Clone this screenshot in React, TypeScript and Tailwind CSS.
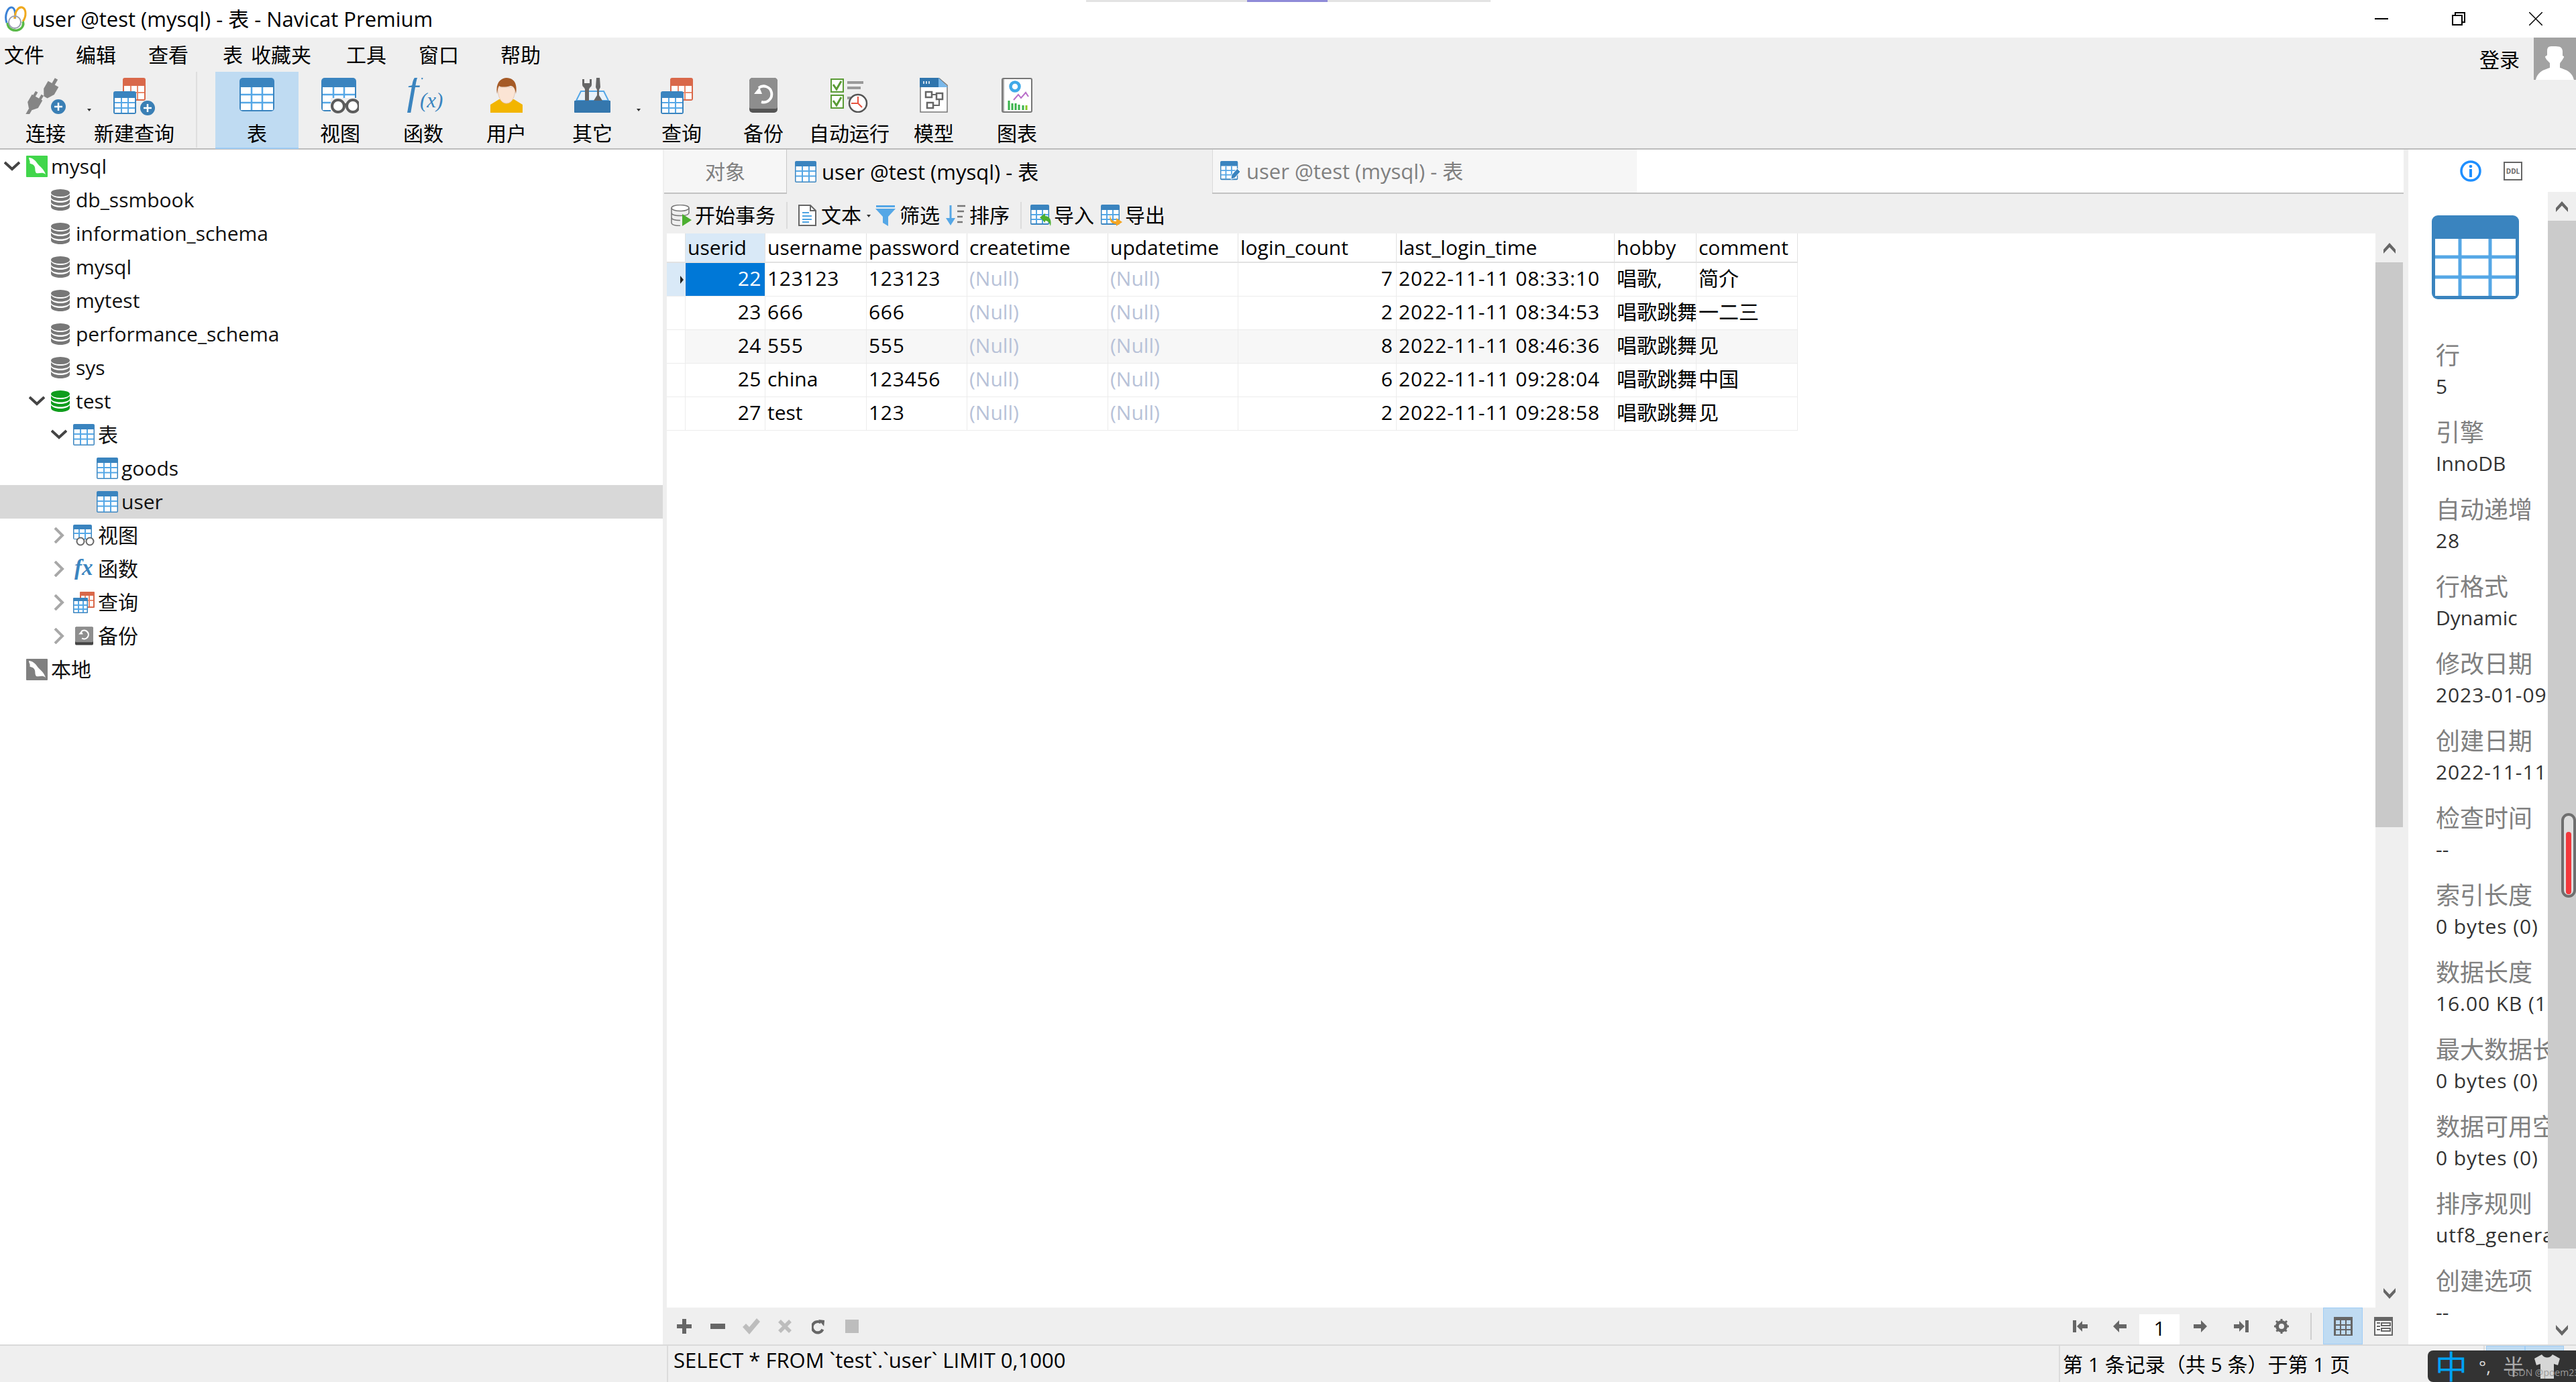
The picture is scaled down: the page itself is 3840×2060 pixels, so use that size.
import React from "react";

const UI = "font-['Open_Sans','Noto_Sans_CJK_SC',sans-serif]";

function TableIcon({ className = "w-[52px] h-[50px]" }: { className?: string }) {
  return (
    <svg viewBox="0 0 52 50" className={className}>
      <rect width="52" height="50" rx="5" fill="#3a84bf" />
      <rect x="2" y="14" width="48" height="34" fill="#fff" />
      <path d="M18 14v34M34 14v34M2 25h48M2 37h48" stroke="#55a7e6" strokeWidth="2.5" />
    </svg>
  );
}

function SmallTable({ className = "w-[32px] h-[32px]" }: { className?: string }) {
  return (
    <svg viewBox="0 0 32 32" className={className}>
      <rect width="32" height="32" rx="2" fill="#3a84bf" />
      <rect x="1.5" y="8" width="29" height="22.5" fill="#fff" />
      <path d="M11 8v23M21 8v23M1 15h30M1 22.500h30" stroke="#55a7e6" strokeWidth="2" />
    </svg>
  );
}

function QueryIcon({ badge = true, className = "w-[62px] h-[56px]" }: { badge?: boolean; className?: string }) {
  return (
    <svg viewBox="0 0 62 56" className={className}>
      <rect x="14" y="0" width="34" height="34" rx="3" fill="#d9684a" />
      <rect x="16" y="12" width="30" height="20" fill="#fff" />
      <path d="M26 12v20M36 12v20M16 22h30" stroke="#ea8a6c" strokeWidth="2" />
      <rect x="0" y="20" width="34" height="34" rx="3" fill="#3a84bf" />
      <rect x="2" y="30" width="30" height="22" fill="#fff" />
      <path d="M12 30v22M22 30v22M2 37h30M2 45h30" stroke="#55a7e6" strokeWidth="2" />
      {badge && (
        <>
          <ellipse cx="51" cy="45" rx="11" ry="11" fill="#3a7fb5" />
          <path d="M51 39v12M45 45h12" stroke="#fff" strokeWidth="2.5" />
        </>
      )}
    </svg>
  );
}

function SmallQuery() {
  return (
    <svg viewBox="0 0 32 32" className="h-[32px] w-[32px]">
      <rect x="10" y="0" width="22" height="24" rx="1" fill="#d9684a" />
      <rect x="12" y="6" width="18" height="16" fill="#fff" />
      <path d="M18 6v16M24 6v16M12 13h18" stroke="#ea8a6c" strokeWidth="2" />
      <rect x="0" y="9" width="22" height="23" rx="1" fill="#3a84bf" />
      <rect x="1.500" y="14" width="19" height="16.500" fill="#fff" />
      <path d="M8 14v17M15 14v17M1 20h20M1 26h20" stroke="#55a7e6" strokeWidth="2" />
    </svg>
  );
}

function PlugIcon() {
  return (
    <svg viewBox="0 0 60 54" className="w-[60px] h-[54px]">
      <g transform="translate(37,17) rotate(30)" fill="#858585">
        <rect x="-2.500" y="-18" width="5" height="11" />
        <path d="M-9 -9 H9 V4 L3 14 H-3 L-9 4Z" />
      </g>
      <g transform="translate(13,37) rotate(30)" fill="#858585">
        <rect x="-7" y="-16" width="4" height="8" />
        <rect x="3" y="-16" width="4" height="8" />
        <path d="M-9 -9 H9 V4 L3 11 H-3 L-9 4Z" />
        <rect x="-2.500" y="10" width="5" height="11" />
      </g>
      <circle cx="49" cy="43" r="11" fill="#3a7fb5" />
      <path d="M49 37v12M43 43h12" stroke="#fff" strokeWidth="2.5" />
    </svg>
  );
}

function ViewIcon() {
  return (
    <svg viewBox="0 0 56 54" className="w-[56px] h-[54px]">
      <rect width="52" height="50" rx="5" fill="#3a84bf" />
      <rect x="2" y="14" width="48" height="34" fill="#fff" />
      <path d="M18 14v34M34 14v34M2 25h48M2 37h48" stroke="#55a7e6" strokeWidth="2.5" />
      <rect x="14" y="30" width="42" height="24" fill="#efefef" />
      <circle cx="25" cy="42" r="9" fill="#fff" stroke="#5c5c5c" strokeWidth="4" />
      <circle cx="47" cy="42" r="9" fill="#fff" stroke="#5c5c5c" strokeWidth="4" />
      <path d="M33 40h6" stroke="#5c5c5c" strokeWidth="4" />
    </svg>
  );
}

function FuncIcon() {
  return (
    <svg viewBox="0 0 58 52" className="w-[58px] h-[52px]">
      <text x="4" y="40" fontFamily="'Liberation Serif',serif" fontStyle="italic" fontSize="64" fill="#3a84bf">f</text>
      <text x="24" y="44" fontFamily="'Liberation Serif',serif" fontStyle="italic" fontSize="31" fill="#3a84bf">(x)</text>
    </svg>
  );
}

function UserIcon() {
  return (
    <svg viewBox="0 0 50 52" className="w-[50px] h-[52px]">
      <path d="M1 40 L14 32 L36 32 L49 40 V52 H1Z" fill="#f2b500" />
      <path d="M12 14 C12 34 20 38 25 38 C30 38 38 34 38 14Z" fill="#fbe4d4" stroke="#e5c9b6" />
      <path d="M11 24 C8 6 18 0 25 0 C34 0 42 6 39 24 C38 16 35 12 31 12 C24 14 16 14 14 12 C12 15 12 18 11 24Z" fill="#a55a26" />
    </svg>
  );
}

function ToolsIcon() {
  return (
    <svg viewBox="0 0 54 52" className="w-[54px] h-[52px]">
      <path d="M3 34 L10 20 H44 L51 34Z" fill="#e8f2fa" stroke="#55a7e6" strokeWidth="2" />
      <path d="M12 2 V10 C12 14 16 14 16 18 V34 H22 V18 C22 14 26 14 26 10 V2 L23 2 V8 H15 V2Z" fill="#666" />
      <path d="M33 0 H38 L39 14 L37 18 V26 L42 34 H29 L34 26 V18 L32 14Z" fill="#666" />
      <rect x="0" y="34" width="54" height="18" rx="1" fill="#3577ad" />
    </svg>
  );
}

function BackupIcon({ className = "w-[42px] h-[52px]" }: { className?: string }) {
  return (
    <svg viewBox="0 0 42 52" className={className}>
      <rect width="42" height="52" rx="5" fill="#555" />
      <path d="M0 5a5 5 0 0 1 5-5h32a5 5 0 0 1 5 5v38a3 3 0 0 1-3 3H3a3 3 0 0 1-3-3Z" fill="#8e8e8e" />
      <path d="M14 15 A12 12 0 1 1 18 36" fill="none" stroke="#fff" strokeWidth="4" />
      <path d="M7 24 L19 24 L15 14Z" fill="#fff" />
    </svg>
  );
}

function AutoRunIcon() {
  return (
    <svg viewBox="0 0 56 52" className="w-[56px] h-[52px]">
      <rect x="1" y="2" width="18" height="19" fill="#fff" stroke="#5a9b35" strokeWidth="2" />
      <path d="M4 10 L9 17 L16 5" fill="none" stroke="#5a9b35" strokeWidth="3" />
      <rect x="1" y="26" width="18" height="19" fill="#fff" stroke="#5a9b35" strokeWidth="2" />
      <path d="M4 34 L9 41 L16 29" fill="none" stroke="#5a9b35" strokeWidth="3" />
      <path d="M25 5h24v4H25ZM25 13h20v4H25ZM25 28h8v4h-8Z" fill="#9a9a9a" />
      <circle cx="41" cy="38" r="13" fill="#fff" stroke="#555" strokeWidth="2.500" />
      <path d="M41 28v10M31 38h10M41 38l6 6" stroke="#e8533f" strokeWidth="2" />
    </svg>
  );
}

function ModelIcon() {
  return (
    <svg viewBox="0 0 42 52" className="w-[42px] h-[52px]">
      <path d="M1 0 H28 L41 11 V51 H1Z" fill="#fff" stroke="#777" strokeWidth="1.500" />
      <path d="M0 0 H28 L42 14 H0Z" fill="#2f75ad" />
      <path d="M28 0 L42 14 H28Z" fill="#7ab8ea" />
      <path d="M6 5v4M10 5v4M14 5v4" stroke="#fff" strokeWidth="1.500" />
      <path d="M9 21h9v8H9ZM25 23h9v9h-9ZM11 37h9v8h-9Z" fill="none" stroke="#666" strokeWidth="2.500" />
      <path d="M18 25h7M29 32v9H20" fill="none" stroke="#666" strokeWidth="2" />
    </svg>
  );
}

function ChartIcon() {
  return (
    <svg viewBox="0 0 46 52" className="w-[46px] h-[52px]">
      <rect x="1" y="1" width="44" height="50" rx="2" fill="#fff" stroke="#777" strokeWidth="2" />
      <path d="M3 2v48" stroke="#aaa" strokeWidth="2" />
      <circle cx="20" cy="13" r="6.500" fill="none" stroke="#3fa9e8" strokeWidth="4.500" />
      <path d="M18 33 L25 25 L29 30 L36 22 L40 28" fill="none" stroke="#b86dc9" strokeWidth="2" />
      <path d="M11 34v14M16 38v10M21 38v10M26 40v8M32 41v7" stroke="#38b34a" strokeWidth="3" />
      <path d="M37 41v7" stroke="#8ac926" strokeWidth="3" />
    </svg>
  );
}

function DbIcon({ color }: { color: string }) {
  return (
    <svg viewBox="0 0 28 32" className="w-[28px] h-[32px]">
      <ellipse cx="14" cy="5.500" rx="14" ry="5.500" fill={color} />
      <path d="M0 8v4c0 3 6 5.500 14 5.500s14-2.500 14-5.500V8c-2 3-8 5-14 5S2 11 0 8Z" fill={color} />
      <path d="M0 15v4c0 3 6 5.500 14 5.500s14-2.500 14-5.500v-4c-2 3-8 5-14 5S2 18 0 15Z" fill={color} />
      <path d="M0 22v4c0 3.500 6 6 14 6s14-2.500 14-6v-4c-2 3-8 5-14 5S2 25 0 22Z" fill={color} />
    </svg>
  );
}

function Conn({ color }: { color: string }) {
  return (
    <svg viewBox="0 0 32 32" className="w-[32px] h-[32px]">
      <rect width="32" height="32" rx="1" fill={color} />
      <path d="M4 3 C9 3 14 7 17 12 C20 16 26 19 29 28 C24 24 21 27 15 26 C12 22 15 18 11 14 C9 12 7 13 5 11 C7 10 4 6 4 3Z" fill="#fff" />
    </svg>
  );
}

function Chevron({ open }: { open: boolean }) {
  return open ? (
    <svg viewBox="0 0 24 16" className="w-[24px] h-[16px]">
      <path d="M1 2 L12 12 L23 2" fill="none" stroke="#444" strokeWidth="4" />
    </svg>
  ) : (
    <svg viewBox="0 0 16 24" className="w-[16px] h-[24px]">
      <path d="M2 1 L13 12 L2 23" fill="none" stroke="#a8a8a8" strokeWidth="4" />
    </svg>
  );
}

function ArrowUp() {
  return (
    <svg viewBox="0 0 18 16" className="w-[18px] h-[16px]">
      <path d="M0 10 L9 0 L18 10 V16 L9 6.500 L0 16Z" fill="#666" />
    </svg>
  );
}
function ArrowDown() {
  return (
    <svg viewBox="0 0 18 16" className="w-[18px] h-[16px]">
      <path d="M0 0 L9 9.500 L18 0 V6 L9 16 L0 6Z" fill="#666" />
    </svg>
  );
}

function ToolBtn({ label, active, w = "w-[124px]", children }: { label: string; active?: boolean; w?: string; children: React.ReactNode }) {
  return (
    <div className={`flex h-[115px] flex-col items-center ${w} ${active ? "bg-[#bfdbf2] border-b-2 border-[#9fcdf6]" : ""}`}>
      <div className="flex h-[65px] w-full items-start justify-center pt-[9px]">{children}</div>
      <div className="leading-[40px] mt-[7px] whitespace-nowrap">{label}</div>
    </div>
  );
}

function Dot({ className = "" }: { className?: string }) {
  return <div className={`h-0 w-0 border-x-[3px] border-t-[4px] border-x-transparent border-t-[#333] ${className}`} />;
}

function TreeRow({ pl, chev, icon, text, selected }: { pl: string; chev?: "open" | "closed"; icon: React.ReactNode; text: string; selected?: boolean }) {
  return (
    <div className={`flex h-[50px] items-center whitespace-nowrap ${pl} ${selected ? "bg-[#d8d8d8]" : ""}`}>
      <div className="flex w-[39px] justify-center pr-[3px]">{chev && <Chevron open={chev === "open"} />}</div>
      <div className="flex h-[32px] w-[32px] items-center justify-start">{icon}</div>
      <div className="ml-[5px] leading-[50px]">{text}</div>
    </div>
  );
}

const rowCols = "grid w-[1686px] grid-cols-[28px_119px_151px_150px_210px_194px_236px_325px_122px_151px]";
const cellB = "border-r border-b border-[#ececec] px-[3px] leading-[46px] whitespace-nowrap overflow-hidden";
const num = (v: string) => (/^\d+$/.test(v) ? "tracking-[0.7px]" : "");

const rows = [
  ["22", "123123", "123123", "7", "2022-11-11 08:33:10", "唱歌,", "简介"],
  ["23", "666", "666", "2", "2022-11-11 08:34:53", "唱歌跳舞", "一二三"],
  ["24", "555", "555", "8", "2022-11-11 08:46:36", "唱歌跳舞", "见"],
  ["25", "china", "123456", "6", "2022-11-11 09:28:04", "唱歌跳舞", "中国"],
  ["27", "test", "123", "2", "2022-11-11 09:28:58", "唱歌跳舞", "见"],
];

const headers = ["userid", "username", "password", "createtime", "updatetime", "login_count", "last_login_time", "hobby", "comment"];

const props = [
  ["行", "5"],
  ["引擎", "InnoDB"],
  ["自动递增", "28"],
  ["行格式", "Dynamic"],
  ["修改日期", "2023-01-09 10:12:45"],
  ["创建日期", "2022-11-11 08:30:12"],
  ["检查时间", "--"],
  ["索引长度", "0 bytes (0)"],
  ["数据长度", "16.00 KB (16,384)"],
  ["最大数据长度", "0 bytes (0)"],
  ["数据可用空间", "0 bytes (0)"],
  ["排序规则", "utf8_general_ci"],
  ["创建选项", "--"],
];

function Grid() {
  return (
    <div className="min-w-0 flex-1 bg-white overflow-hidden">
      <div className={`${rowCols} h-[44px]`}>
        <div className="border-r border-b-2 border-[#e2e2e2]" />
        {headers.map((h, i) => (
          <div key={h} className={`border-r border-b-2 border-[#e2e2e2] px-[3px] leading-[42px] whitespace-nowrap overflow-hidden ${i === 0 ? "bg-[#d9e9f7]" : ""}`}>
            {h}
          </div>
        ))}
      </div>
      {rows.map((r, i) => (
        <div key={r[0]} className={`${rowCols} h-[50px] ${i === 2 ? "bg-[#f7f7f7]" : ""}`}>
          <div className={`flex items-center justify-end pr-[2px] border-r border-b border-[#ececec] ${i === 0 ? "bg-[#d9e9f7]" : "bg-white"}`}>
            {i === 0 && <div className="h-0 w-0 border-y-[6px] border-l-[5px] border-y-transparent border-l-[#222]" />}
          </div>
          <div className={`${cellB} pr-[5px] text-right tracking-[0.5px] ${i === 0 ? "bg-[#0078d7] text-white" : ""}`}>{r[0]}</div>
          <div className={`${cellB} ${num(r[1])}`}>{r[1]}</div>
          <div className={`${cellB} ${num(r[2])}`}>{r[2]}</div>
          <div className={`${cellB} text-[#b8c2d8]`}>(Null)</div>
          <div className={`${cellB} text-[#b8c2d8]`}>(Null)</div>
          <div className={`${cellB} pr-[5px] text-right`}>{r[3]}</div>
          <div className={`${cellB} tracking-[0.9px]`}>{r[4]}</div>
          <div className={cellB}>{r[5]}</div>
          <div className={cellB}>{r[6]}</div>
        </div>
      ))}
    </div>
  );
}

export default function App() {
  return (
    <div className={`relative flex h-[2060px] w-[3840px] flex-col overflow-hidden bg-[#efefef] text-[30px] text-black ${UI}`}>
      {/* Title bar */}
      <div className="flex h-[56px] items-center bg-white pl-[4px]">
        <svg viewBox="0 0 38 40" className="h-[40px] w-[38px]">
          <path d="M6 26 C2 14 8 3 13 3 C18 3 20 12 18 20" fill="none" stroke="#3b82d6" strokeWidth="3" />
          <path d="M18 20 C18 8 24 2 29 3 C35 5 36 16 30 24" fill="none" stroke="#f0a91e" strokeWidth="3" />
          <path d="M7 26 C8 36 16 38 22 37 C30 35 32 28 30 24" fill="none" stroke="#58b947" strokeWidth="3.500" />
          <circle cx="18" cy="25" r="9" fill="none" stroke="#9a9fb0" strokeWidth="2" />
        </svg>
        <div className="ml-[6px] whitespace-nowrap text-[31px]">user @test (mysql) - 表 - Navicat Premium</div>
        <div className="ml-auto flex items-center">
          <div className="flex w-[115px] justify-center"><div className="h-[2px] w-[20px] bg-black" /></div>
          <div className="flex w-[115px] justify-center">
            <svg viewBox="0 0 20 20" className="h-[20px] w-[20px]">
              <path d="M1 5h14v14H1ZM5 5V1h14v14h-4" fill="none" stroke="#000" strokeWidth="2" />
            </svg>
          </div>
          <div className="flex w-[118px] justify-center pr-[3px]">
            <svg viewBox="0 0 20 20" className="h-[20px] w-[20px]">
              <path d="M0 0 L20 20 M20 0 L0 20" stroke="#000" strokeWidth="1.500" />
            </svg>
          </div>
        </div>
      </div>

      {/* Menu */}
      <div className="relative flex h-[51px] items-center pl-[6px] whitespace-nowrap">
        <span>文件</span>
        <span className="ml-[47px]">编辑</span>
        <span className="ml-[48px]">查看</span>
        <span className="ml-[51px]">表</span>
        <span className="ml-[12px]">收藏夹</span>
        <span className="ml-[52px]">工具</span>
        <span className="ml-[48px]">窗口</span>
        <span className="ml-[62px]">帮助</span>
        <span className="ml-auto mr-[84px] mt-[14px]">登录</span>
        <div className="absolute right-0 top-0 h-[63px] w-[63px] overflow-hidden bg-[#a2a2a2]">
          <svg viewBox="0 0 63 63" className="h-[63px] w-[63px]">
            <path d="M3 63 C6 50 16 48 24 45 L24 38 C20 34 18 32 17 29 C17 27 19 28 20 26 L20 20 C20 12 25 13 31 13 C39 13 42 14 43 20 L43 27 C45 28 46 28 44 31 C42 35 40 36 39 39 L39 45 C47 48 57 50 60 63Z" fill="#fff" />
          </svg>
        </div>
      </div>

      {/* Toolbar */}
      <div className="flex h-[116px] items-start border-b-2 border-[#bcbcbc] pl-[6px]">
        <ToolBtn label="连接"><PlugIcon /></ToolBtn>
        <Dot className="mt-[55px]" />
        <div className="w-[2px]" />
        <ToolBtn label="新建查询"><QueryIcon /></ToolBtn>
        <div className="ml-[30px] h-[113px] w-[2px] bg-[#dedede]" />
        <div className="ml-[27px]" />
        <ToolBtn label="表" active><TableIcon /></ToolBtn>
        <ToolBtn label="视图"><ViewIcon /></ToolBtn>
        <ToolBtn label="函数"><FuncIcon /></ToolBtn>
        <ToolBtn label="用户"><UserIcon /></ToolBtn>
        <ToolBtn label="其它" w="w-[132px]"><ToolsIcon /></ToolBtn>
        <Dot className="mt-[55px]" />
        <ToolBtn label="查询" w="w-[122px]"><QueryIcon badge={false} className="w-[62px] h-[56px]" /></ToolBtn>
        <ToolBtn label="备份" w="w-[122px]"><BackupIcon /></ToolBtn>
        <ToolBtn label="自动运行" w="w-[134px]"><AutoRunIcon /></ToolBtn>
        <ToolBtn label="模型" w="w-[118px]"><ModelIcon /></ToolBtn>
        <ToolBtn label="图表" w="w-[130px]"><ChartIcon /></ToolBtn>
      </div>

      {/* Main */}
      <div className="flex h-[1781px] min-h-0">
        {/* Tree */}
        <div className="w-[988px] shrink-0 bg-white text-[#111]">
          <TreeRow pl="pl-0" chev="open" icon={<Conn color="#41d64b" />} text="mysql" />
          <TreeRow pl="pl-[37px]" icon={<DbIcon color="#777" />} text="db_ssmbook" />
          <TreeRow pl="pl-[37px]" icon={<DbIcon color="#777" />} text="information_schema" />
          <TreeRow pl="pl-[37px]" icon={<DbIcon color="#777" />} text="mysql" />
          <TreeRow pl="pl-[37px]" icon={<DbIcon color="#777" />} text="mytest" />
          <TreeRow pl="pl-[37px]" icon={<DbIcon color="#777" />} text="performance_schema" />
          <TreeRow pl="pl-[37px]" icon={<DbIcon color="#777" />} text="sys" />
          <TreeRow pl="pl-[37px]" chev="open" icon={<DbIcon color="#0f9d1c" />} text="test" />
          <TreeRow pl="pl-[70px]" chev="open" icon={<SmallTable />} text="表" />
          <TreeRow pl="pl-[105px]" icon={<SmallTable />} text="goods" />
          <TreeRow pl="pl-[105px]" selected icon={<SmallTable />} text="user" />
          <TreeRow pl="pl-[70px]" chev="closed" icon={
            <svg viewBox="0 0 32 32" className="h-[32px] w-[32px]">
              <rect width="28" height="22" rx="2" fill="#3a84bf" />
              <rect x="1.500" y="7" width="25" height="14" fill="#fff" />
              <path d="M9 7v14M18 7v14M1 13h26" stroke="#55a7e6" strokeWidth="2" />
              <circle cx="11" cy="25" r="5.500" fill="#fff" stroke="#666" strokeWidth="2" />
              <circle cx="25" cy="25" r="5.500" fill="#fff" stroke="#666" strokeWidth="2" />
            </svg>
          } text="视图" />
          <TreeRow pl="pl-[70px]" chev="closed" icon={
            <svg viewBox="0 0 32 32" className="h-[32px] w-[32px]">
              <text x="2" y="25" fontFamily="'Liberation Serif',serif" fontStyle="italic" fontWeight="bold" fontSize="33" fill="#3a84bf">fx</text>
            </svg>
          } text="函数" />
          <TreeRow pl="pl-[70px]" chev="closed" icon={<SmallQuery />} text="查询" />
          <TreeRow pl="pl-[70px]" chev="closed" icon={
            <svg viewBox="0 0 32 32" className="ml-[3px] h-[32px] w-[27px]">
              <rect width="32" height="32" rx="2" fill="#444" />
              <rect width="32" height="27" rx="2" fill="#8e8e8e" />
              <path d="M11 8 A7.500 7.500 0 1 1 12 20" fill="none" stroke="#fff" strokeWidth="2.500" />
              <path d="M6 13 L14 13 L11 7Z" fill="#fff" />
            </svg>
          } text="备份" />
          <TreeRow pl="pl-0" icon={<Conn color="#808080" />} text="本地" />
        </div>

        {/* Center */}
        <div className="flex w-[595px] min-w-0 flex-1 flex-col">
          {/* Tabs */}
          <div className="ml-[2px] mr-[7px] flex h-[66px] shrink-0 border-b-2 border-[#c2c2c2] bg-white">
            <div className="flex w-[183px] items-center justify-center border-r border-[#c8c8c8] bg-[#f6f6f6] text-[#808080]">对象</div>
            <div className="-mb-[2px] flex w-[634px] items-center bg-[#efefef] pl-[12px]">
              <SmallTable />
              <span className="ml-[8px] whitespace-nowrap text-[31px]">user @test (mysql) - 表</span>
            </div>
            <div className="flex w-[633px] items-center border-l border-[#dadada] bg-[#f6f6f6] pl-[11px] text-[#808080]">
              <svg viewBox="0 0 32 32" className="h-[32px] w-[30px]">
                <rect width="28" height="30" rx="2" fill="#3a84bf" />
                <rect x="1.500" y="8" width="25" height="20" fill="#fff" />
                <path d="M9 8v20M18 8v20M1 15h26M1 22h26" stroke="#55a7e6" strokeWidth="2" />
                <path d="M17 29 L18 22 L27 12 L32 17 L23 27Z" fill="#3a84bf" stroke="#fff" />
              </svg>
              <span className="ml-[9px] whitespace-nowrap text-[31px]">user @test (mysql) - 表</span>
            </div>
          </div>

          {/* Form toolbar */}
          <div className="flex h-[59px] shrink-0 items-center whitespace-nowrap pt-[4px] pl-[12px]">
            <svg viewBox="0 0 31 32" className="h-[32px] w-[31px]">
              <ellipse cx="14" cy="5" rx="13" ry="4.500" fill="#fff" stroke="#777" strokeWidth="1.500" />
              <path d="M1 5v22c0 3 6 4.500 13 4.500M27 5v8M1 12c0 3 6 4.500 13 4.500s13-1.500 13-4.500M1 19c0 3 6 4.500 13 4.500" fill="none" stroke="#777" strokeWidth="1.500" />
              <path d="M17 14 L31 23 L17 32Z" fill="#4caf30" />
            </svg>
            <span className="ml-[5px]">开始事务</span>
            <div className="ml-[16px] h-[40px] w-[2px] bg-[#dcdcdc]" />
            <svg viewBox="0 0 27 32" className="ml-[16px] h-[32px] w-[27px]">
              <path d="M1 1 H18 L26 9 V31 H1Z" fill="#fff" stroke="#666" strokeWidth="2" />
              <path d="M18 1v8h8" fill="none" stroke="#666" strokeWidth="2" />
              <path d="M6 12h10M6 17h14M6 22h14M6 26h10" stroke="#4da3e2" strokeWidth="2" />
            </svg>
            <span className="ml-[7px]">文本</span>
            <Dot className="ml-[8px] mt-[2px]" />
            <svg viewBox="0 0 32 32" className="ml-[6px] h-[32px] w-[32px]">
              <path d="M2 1h28v3H2Z" fill="#55a7e6" />
              <path d="M1 6 H31 L20 18 V32 L12 27 V18Z" fill="#55a7e6" />
            </svg>
            <span className="ml-[5px]">筛选</span>
            <svg viewBox="0 0 32 32" className="ml-[8px] h-[32px] w-[32px]">
              <path d="M8 1v22" stroke="#55a7e6" strokeWidth="3" />
              <path d="M1 20 H15 L8 31Z" fill="#55a7e6" />
              <path d="M18 2h12M18 10h10M18 18h8M18 26h8" stroke="#777" strokeWidth="2.500" />
            </svg>
            <span className="ml-[4px]">排序</span>
            <div className="ml-[16px] h-[40px] w-[2px] bg-[#dcdcdc]" />
            <svg viewBox="0 0 32 32" className="ml-[13px] h-[32px] w-[32px]">
              <rect width="28" height="30" rx="2" fill="#3a84bf" />
              <rect x="1.500" y="8" width="25" height="20" fill="#fff" />
              <path d="M9 8v20M18 8v20M1 15h26M1 22h26" stroke="#55a7e6" strokeWidth="2" />
              <path d="M14 19 L22 13 V17 C29 17 32 24 30 32 C28 26 26 24 22 24 V27Z" fill="#4caf30" />
            </svg>
            <span className="ml-[3px]">导入</span>
            <svg viewBox="0 0 32 32" className="ml-[10px] h-[32px] w-[32px]">
              <rect width="28" height="30" rx="2" fill="#3a84bf" />
              <rect x="1.500" y="8" width="25" height="20" fill="#fff" />
              <path d="M9 8v20M18 8v20M1 15h26M1 22h26" stroke="#55a7e6" strokeWidth="2" />
              <path d="M14 14 C14 22 17 25 23 25 V20 L32 26 L23 32 V29 C15 29 12 24 14 14Z" fill="#f5a623" />
            </svg>
            <span className="ml-[4px]">导出</span>
          </div>

          {/* Grid + scrollbar */}
          <div className="flex min-h-0 flex-1 pl-[6px] pr-[8px]">
            <Grid />
            <div className="flex w-[41px] shrink-0 flex-col items-center">
              <div className="flex h-[43px] items-center justify-center"><ArrowUp /></div>
              <div className="h-[842px] w-full bg-[#c9c9c9]" />
              <div className="flex-1" />
              <div className="flex h-[43px] items-center justify-center"><ArrowDown /></div>
            </div>
          </div>

          {/* Bottom bar */}
          <div className="flex h-[55px] shrink-0 items-center pl-[7px]">
            <div className="flex w-[50px] justify-center">
              <svg viewBox="0 0 22 22" className="h-[22px] w-[22px]"><path d="M8 0h6v8h8v6h-8v8H8v-8H0V8h8Z" fill="#666" /></svg>
            </div>
            <div className="flex w-[50px] justify-center">
              <svg viewBox="0 0 22 8" className="h-[8px] w-[22px]"><rect width="22" height="8" fill="#666" /></svg>
            </div>
            <div className="flex w-[50px] justify-center">
              <svg viewBox="0 0 26 24" className="h-[24px] w-[26px]"><path d="M0 13 L5 8 L10 13 L21 0 L26 5 L10 24Z" fill="#bdbdbd" /></svg>
            </div>
            <div className="flex w-[50px] justify-center">
              <svg viewBox="0 0 20 20" className="h-[20px] w-[20px]"><path d="M2 2 L18 18 M18 2 L2 18" stroke="#bdbdbd" strokeWidth="5.500" /></svg>
            </div>
            <div className="flex w-[50px] justify-center">
              <svg viewBox="0 0 22 24" className="h-[24px] w-[20px]">
                <path d="M18 17 A9 9 0 1 1 15 6" fill="none" stroke="#666" strokeWidth="4.500" />
                <path d="M11 1 L21 2 L20 12Z" fill="#666" />
              </svg>
            </div>
            <div className="flex w-[50px] justify-center"><div className="h-[20px] w-[20px] bg-[#bdbdbd]" /></div>

            <div className="ml-auto flex h-full items-center pr-[7px]">
              <div className="flex w-[60px] justify-center">
                <svg viewBox="0 0 22 18" className="h-[18px] w-[22px]"><path d="M0 0h5v18H0ZM6 9 L14 1 V6 H22 V12 H14 V17Z" fill="#666" /></svg>
              </div>
              <div className="flex w-[58px] justify-center">
                <svg viewBox="0 0 20 18" className="h-[18px] w-[20px]"><path d="M0 9 L9 0 V6 H20 V12 H9 V18Z" fill="#666" /></svg>
              </div>
              <div className="flex h-[45px] w-[60px] items-center justify-center self-end bg-white pb-[4px]">1</div>
              <div className="flex w-[62px] justify-center">
                <svg viewBox="0 0 20 18" className="h-[18px] w-[20px]"><path d="M20 9 L11 0 V6 H0 V12 H11 V18Z" fill="#666" /></svg>
              </div>
              <div className="flex w-[60px] justify-center">
                <svg viewBox="0 0 22 18" className="h-[18px] w-[22px]"><path d="M22 0h-5v18h5ZM16 9 L8 1 V6 H0 V12 H8 V17Z" fill="#666" /></svg>
              </div>
              <div className="flex w-[60px] justify-center">
                <svg viewBox="0 0 22 22" className="h-[22px] w-[22px]">
                  <circle cx="11" cy="11" r="6.500" fill="none" stroke="#666" strokeWidth="5" />
                  <path d="M11 0v22M0 11h22M3 3l16 16M19 3L3 19" stroke="#666" strokeWidth="3" strokeDasharray="4 14 4" />
                </svg>
              </div>
              <div className="ml-[13px] h-[40px] w-[2px] bg-[#cfcfcf]" />
              <div className="ml-[17px] flex h-[55px] w-[59px] items-center justify-center border border-[#9fcdf6] bg-[#bfdbf2]">
                <svg viewBox="0 0 28 28" className="h-[28px] w-[28px]">
                  <rect width="28" height="28" fill="#666" />
                  <path d="M3 5h6v6H3ZM11 5h6v6h-6ZM19 5h6v6h-6ZM3 13h6v5H3ZM11 13h6v5h-6ZM19 13h6v5h-6ZM3 20h6v6H3ZM11 20h6v6h-6ZM19 20h6v6h-6Z" fill="#bfdbf2" />
                </svg>
              </div>
              <div className="flex w-[61px] justify-center">
                <svg viewBox="0 0 28 28" className="h-[28px] w-[28px]">
                  <rect x="1" y="1" width="26" height="26" fill="#fff" stroke="#666" strokeWidth="2" />
                  <path d="M1 4h26" stroke="#666" strokeWidth="4" />
                  <path d="M4 9h5M4 14h5M4 19h5" stroke="#666" strokeWidth="2" />
                  <path d="M11 9h13v4H11ZM11 17h13v4H11Z" fill="none" stroke="#666" strokeWidth="2" />
                </svg>
              </div>
            </div>
          </div>
        </div>

        {/* Right panel */}
        <div className="flex w-[250px] shrink-0 flex-col bg-white">
          <div className="flex h-[63px] shrink-0 items-center pl-[77px]">
            <svg viewBox="0 0 32 32" className="h-[32px] w-[32px]">
              <circle cx="16" cy="16" r="14" fill="#fff" stroke="#1e8fff" strokeWidth="3.500" />
              <circle cx="16" cy="9" r="2.300" fill="#1e8fff" />
              <rect x="14" y="13" width="4" height="12" fill="#1e8fff" />
            </svg>
            <div className="ml-[33px] flex h-[28px] w-[28px] items-center justify-center border-2 border-[#666] text-[10px] font-bold leading-none text-[#666]">DDL</div>
          </div>
          <div className="flex min-h-0 flex-1">
            <div className="w-[208px] overflow-hidden">
              <div className="ml-[35px] mt-[35px]">
                <TableBig />
              </div>
              <div className="mt-[61px] pl-[41px]">
                {props.map(([k, v]) => (
                  <div key={k} className="h-[115px] whitespace-nowrap">
                    <div className="h-[46px] text-[36px] leading-[46px] text-[#808080]">{k}</div>
                    <div className={`h-[46px] text-[30px] leading-[46px] text-[#333] ${/\d/.test(v) ? "tracking-[0.9px]" : ""}`}>{v}</div>
                  </div>
                ))}
              </div>
            </div>
            <div className="flex w-[42px] shrink-0 flex-col items-center bg-[#efefef]">
              <div className="flex h-[43px] items-center justify-center"><ArrowUp /></div>
              <div className="h-[1532px] w-full bg-[#cbcbcb]" />
              <div className="flex-1" />
              <div className="flex h-[43px] items-center justify-center"><ArrowDown /></div>
            </div>
          </div>
        </div>
      </div>

      {/* Status */}
      <div className="flex h-[56px] shrink-0 items-stretch border-t-2 border-[#dadada] whitespace-nowrap">
        <div className="w-[994px]" />
        <div className="flex w-[2075px] items-center border-l-2 border-[#dcdcdc] pb-[12px] pl-[8px] text-[31px]">SELECT * FROM `test`.`user` LIMIT 0,1000</div>
        <div className="flex w-[633px] items-center border-l-2 border-[#dcdcdc] pl-[4px]">第 1 条记录（共 5 条）于第 1 页</div>
        <div className="flex border-l-2 border-[#dcdcdc] pl-[2px]">
          <div className="w-[58px] border border-[#9fcdf6] bg-[#bfdbf2]" />
          <div className="w-[58px] border border-[#9fcdf6] bg-[#bfdbf2]" />
        </div>
      </div>

      {/* Top sliver of an overlapping window */}
      <div className="absolute left-[1619px] top-0 flex h-[3px] w-[603px] bg-[#e3e3e3]">
        <div className="ml-[240px] w-[120px] bg-[#8f8bd8]" />
      </div>

      {/* Floating thermometer */}
      <div className="absolute left-[3818px] top-[1212px] h-[126px] w-[22px] rounded-full border-[4px] border-[#6f6f6f] bg-[#dedede] pt-[24px]">
        <div className="mx-auto h-[93px] w-[8px] rounded-full bg-[#f2383c]" />
      </div>

      {/* IME bar */}
      <div className="absolute bottom-0 right-0 flex h-[47px] w-[221px] items-center overflow-hidden rounded-l-[8px] bg-[#333] text-[#ddd]">
        <span className="ml-[11px] text-[48px] leading-[47px] text-[#00a2f5]">中</span>
        <span className="ml-[17px] text-[26px] leading-none">°,</span>
        <span className="ml-[18px] text-[32px] leading-none text-[#aaa]">半</span>
        <svg viewBox="0 0 40 40" className="ml-[14px] h-[40px] w-[40px]">
          <path d="M12 2 C16 8 24 8 28 2 L39 8 L36 18 L30 16 V38 H10 V16 L4 18 L1 8Z" fill="#d6d6d6" />
        </svg>
        <span className="absolute bottom-[5px] left-[119px] whitespace-nowrap text-[14px] leading-[18px] text-[#9a9a9a]">CSDN @poem23</span>
      </div>
    </div>
  );
}

function TableBig() {
  return (
    <svg viewBox="0 0 130 125" className="h-[125px] w-[130px]">
      <rect width="130" height="125" rx="9" fill="#3a84bf" />
      <rect x="5" y="35" width="120" height="85" fill="#fff" />
      <path d="M42 35v85M87 35v85M5 62h120M5 92h120" stroke="#55a7e6" strokeWidth="5" />
    </svg>
  );
}
